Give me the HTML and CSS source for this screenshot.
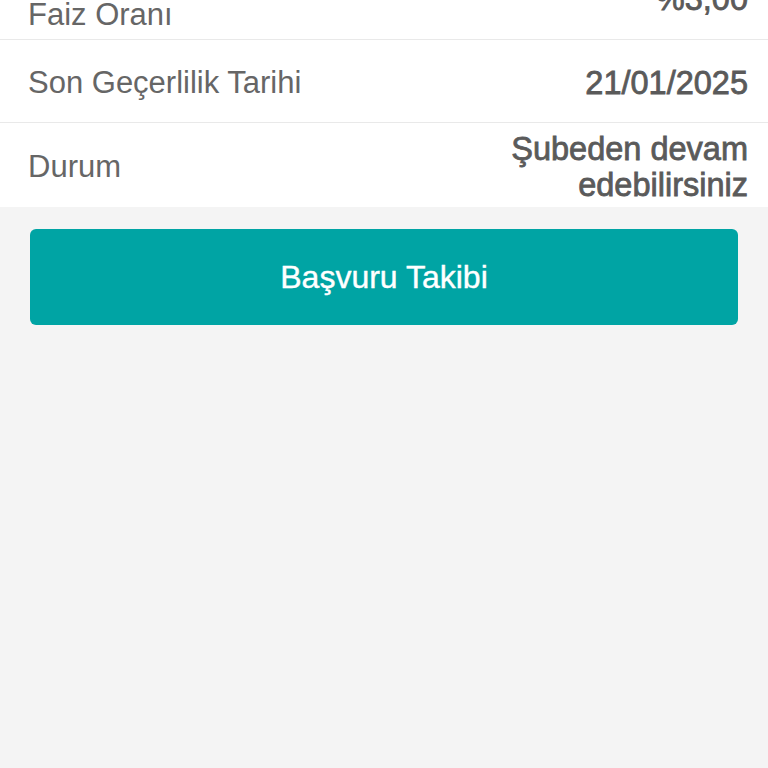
FILE: index.html
```html
<!DOCTYPE html>
<html lang="tr">
<head>
    <meta charset="UTF-8">
    <meta name="viewport" content="width=device-width, initial-scale=1.0">
    <title>Başvuru Detayı</title>
    <link rel="stylesheet" href="styles.css">
</head>
<body>

<!-- Detail list -->
<div class="detail-list">
    <div class="detail-row row-top">
        <div class="label">Faiz Oranı</div>
        <div class="value">%3,00</div>
    </div>

    <div class="detail-row">
        <div class="label">Son Geçerlilik Tarihi</div>
        <div class="value">21/01/2025</div>
    </div>

    <div class="detail-row">
        <div class="label">Durum</div>
        <div class="value">Şubeden devam<br>edebilirsiniz</div>
    </div>
</div>

<div class="actions">
    <button class="track-button">Başvuru Takibi</button>
</div>

</body>
</html>
```

FILE: styles.css
```css
body {
    margin: 0;
    padding: 0;
    font-family: "Liberation Sans", Arial, sans-serif;
    background-color: #f4f4f4;
    height: 100vh;
    overflow: hidden;
}

.detail-list {
    background-color: #fff;
    margin-top: -43px;
}

.detail-row {
    display: flex;
    justify-content: space-between;
    align-items: center;
    min-height: 83px;
    box-sizing: border-box;
    padding: 8px 20px 4px 28px;
    border-bottom: 1px solid #e9e9e9;
}

.detail-row:last-child {
    border-bottom: none;
    min-height: 84px;
}

.row-top {
    align-items: flex-end;
    padding-bottom: 6px;
}

.row-top .value {
    margin-bottom: 16px;
}

.label {
    font-size: 31px;
    line-height: 36px;
    color: #666;
}

/* medium weight look: regular face with a thin stroke */
.value {
    font-size: 32.5px;
    line-height: 36px;
    color: #5a5a5a;
    -webkit-text-stroke: 0.8px #5a5a5a;
    text-align: right;
}

.actions {
    padding: 22px 30px;
}

.track-button {
    display: block;
    width: 100%;
    height: 96px;
    border: none;
    border-radius: 6px;
    background-color: #00a4a4;
    color: #fff;
    font-family: "Liberation Sans", Arial, sans-serif;
    font-size: 32px;
    -webkit-text-stroke: 0.4px #fff;
    cursor: pointer;
}
```
